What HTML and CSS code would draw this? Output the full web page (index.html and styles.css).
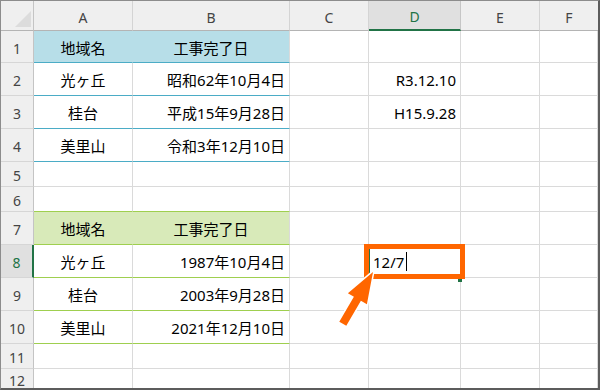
FILE: index.html
```html
<!DOCTYPE html>
<html lang="ja">
<head>
<meta charset="utf-8">
<title>Sheet</title>
<link rel="stylesheet" href="styles.css">
</head>
<body>
<div class="sheet">
  <div class="corner"><span class="tri"></span></div>
  <div class="ch">A</div>
  <div class="ch">B</div>
  <div class="ch">C</div>
  <div class="ch sel">D</div>
  <div class="ch">E</div>
  <div class="ch last">F</div>

  <div class="rh">1</div>
  <div class="c ctr fb bb nr">地域名</div>
  <div class="c ctr fb bb">工事完了日</div>
  <div class="c"></div>
  <div class="c"></div>
  <div class="c"></div>
  <div class="c"></div>

  <div class="rh">2</div>
  <div class="c ctr bb">光ヶ丘</div>
  <div class="c rt bb">昭和62年10月4日</div>
  <div class="c"></div>
  <div class="c rt">R3.12.10</div>
  <div class="c"></div>
  <div class="c"></div>

  <div class="rh">3</div>
  <div class="c ctr bb">桂台</div>
  <div class="c rt bb">平成15年9月28日</div>
  <div class="c"></div>
  <div class="c rt">H15.9.28</div>
  <div class="c"></div>
  <div class="c"></div>

  <div class="rh">4</div>
  <div class="c ctr bb">美里山</div>
  <div class="c rt bb">令和3年12月10日</div>
  <div class="c"></div>
  <div class="c"></div>
  <div class="c"></div>
  <div class="c"></div>

  <div class="rh">5</div>
  <div class="c"></div>
  <div class="c"></div>
  <div class="c"></div>
  <div class="c"></div>
  <div class="c"></div>
  <div class="c"></div>

  <div class="rh">6</div>
  <div class="c gb"></div>
  <div class="c gb"></div>
  <div class="c"></div>
  <div class="c"></div>
  <div class="c"></div>
  <div class="c"></div>

  <div class="rh">7</div>
  <div class="c ctr fg gb nrg">地域名</div>
  <div class="c ctr fg gb">工事完了日</div>
  <div class="c"></div>
  <div class="c"></div>
  <div class="c"></div>
  <div class="c"></div>

  <div class="rh sel">8</div>
  <div class="c ctr gb">光ヶ丘</div>
  <div class="c rt gb">1987年10月4日</div>
  <div class="c"></div>
  <div class="c lt">12/7<span class="caret"></span></div>
  <div class="c"></div>
  <div class="c"></div>

  <div class="rh">9</div>
  <div class="c ctr gb">桂台</div>
  <div class="c rt gb">2003年9月28日</div>
  <div class="c"></div>
  <div class="c"></div>
  <div class="c"></div>
  <div class="c"></div>

  <div class="rh">10</div>
  <div class="c ctr gb">美里山</div>
  <div class="c rt gb">2021年12月10日</div>
  <div class="c"></div>
  <div class="c"></div>
  <div class="c"></div>
  <div class="c"></div>

  <div class="rh">11</div>
  <div class="c"></div>
  <div class="c"></div>
  <div class="c"></div>
  <div class="c"></div>
  <div class="c"></div>
  <div class="c"></div>

  <div class="rh end">12</div>
  <div class="c end"></div>
  <div class="c end"></div>
  <div class="c end"></div>
  <div class="c end"></div>
  <div class="c end"></div>
  <div class="c end"></div>

  <div class="selbox"></div>
  <div class="handle"></div>
  <div class="highlight"></div>
  <svg class="arrow" viewBox="0 0 600 390" width="600" height="390">
    <polygon points="373,272 366.9,304.3 360.9,300.8 346.3,325.8 339.3,321.8 353.9,296.8 347.9,293.3" fill="#ff6600" stroke="#ffffff" stroke-width="3" stroke-linejoin="miter" paint-order="stroke"/>
  </svg>
</div>
</body>
</html>
```
FILE: styles.css
```css
html, body {
  margin: 0;
  padding: 0;
  background: #ffffff;
}

.sheet {
  position: relative;
  width: 600px;
  height: 390px;
  box-sizing: border-box;
  border-top: 1px solid #8c8c8c;
  border-left: 1px solid #8c8c8c;
  border-right: 2px solid #5c5c5c;
  border-bottom: 2px solid #5c5c5c;
  display: grid;
  grid-template-columns: 33px 99px 157px 79px 92px 79px 58px;
  grid-template-rows: 30px 32px 33px 33px 33px 25px 25px 33px 33px 33px 33px 25px 19px;
  overflow: hidden;
  font-family: "Noto Sans", "Noto Sans CJK JP", sans-serif;
  font-size: 15px;
  color: #000;
}

.corner {
  background: #efefef;
  border-right: 1px solid #c4c4c4;
  border-bottom: 1px solid #b4b4b4;
  box-sizing: border-box;
  display: flex;
  justify-content: flex-end;
  align-items: flex-end;
  padding: 0 2px 3px 0;
}

.tri {
  width: 16px;
  height: 16px;
  background: #dcdcdc;
  clip-path: polygon(100% 0, 100% 100%, 0 100%);
}

.ch {
  background: #efefef;
  border-right: 1px solid #d4d4d4;
  border-bottom: 1px solid #b4b4b4;
  box-sizing: border-box;
  display: flex;
  align-items: center;
  justify-content: center;
  padding-top: 3px;
  font-family: "Noto Sans", "Liberation Sans", sans-serif;
  font-size: 14px;
  color: #444;
}

.ch.sel {
  background: #e0e0e0;
  color: #217346;
  border-bottom: 2px solid #217346;
  border-right-color: #c6c6c6;
}

.ch.last {
  border-right: none;
}

.rh {
  background: #efefef;
  border-right: 1px solid #c4c4c4;
  border-bottom: 1px solid #d6d6d6;
  box-sizing: border-box;
  display: flex;
  align-items: center;
  justify-content: center;
  padding-top: 3px;
  font-family: "Noto Sans", "Liberation Sans", sans-serif;
  font-size: 14px;
  color: #444;
}

.rh.sel {
  background: #e0e0e0;
  color: #217346;
  border-right: 2px solid #217346;
}

.c {
  border-right: 1px solid #dadada;
  border-bottom: 1px solid #dadada;
  box-sizing: border-box;
  display: flex;
  align-items: center;
  white-space: nowrap;
  padding-top: 1px;
}

.end {
  border-bottom: none;
}

.ctr { justify-content: center; }
.rt { justify-content: flex-end; padding-right: 4px; }
.lt { justify-content: flex-start; padding-left: 4px; }

.fb { background: #b7dee8; }
.fg { background: #d8eab9; }
.nr { border-right-color: #b7dee8; }
.nrg { border-right-color: #d8eab9; }
.bb { border-bottom: 1px solid #4bacc6; }
.gb { border-bottom: 1px solid #9fcf4f; }

.caret {
  display: inline-block;
  width: 1px;
  height: 19px;
  margin-left: 2px;
  background: #000;
}

.selbox {
  position: absolute;
  left: 367px;
  top: 243px;
  width: 95px;
  height: 35px;
  box-sizing: border-box;
  border: 2px solid #217346;
}

.handle {
  position: absolute;
  left: 457px;
  top: 277px;
  width: 4px;
  height: 4px;
  background: #217346;
}

.highlight {
  position: absolute;
  left: 363px;
  top: 243px;
  width: 101px;
  height: 35px;
  box-sizing: border-box;
  border: 5px solid #ff6600;
}

.arrow {
  position: absolute;
  left: -1px;
  top: -1px;
  pointer-events: none;
}
```
